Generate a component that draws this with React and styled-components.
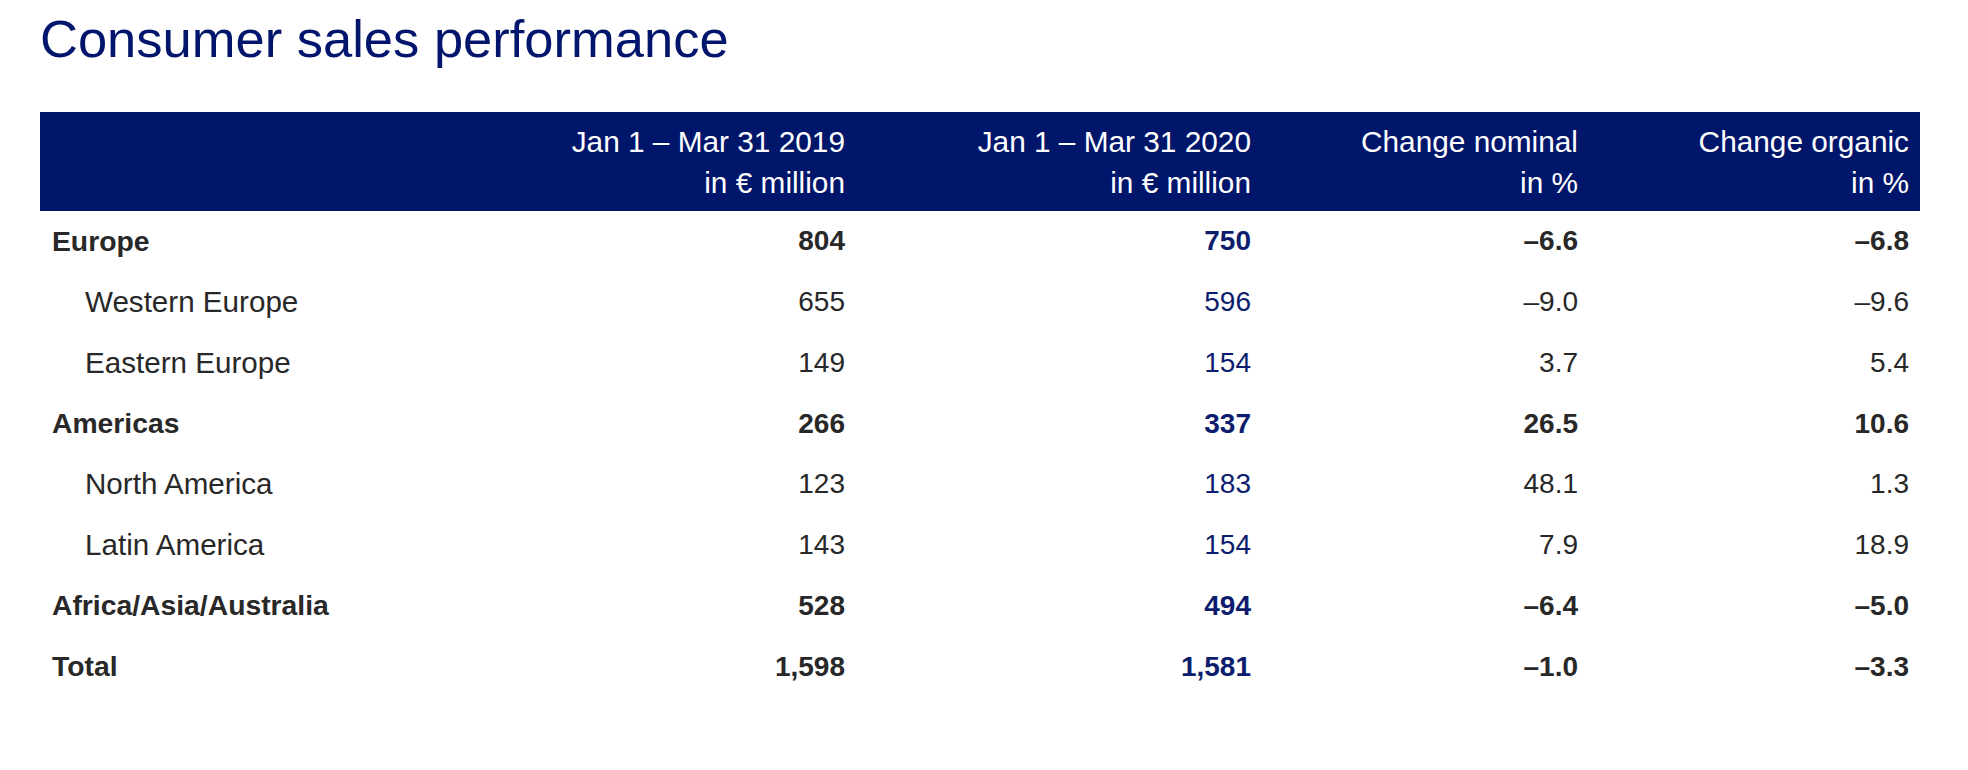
import React from "react";
import styled, { createGlobalStyle } from "styled-components";

const GlobalStyle = createGlobalStyle`
  html, body {
    margin: 0;
    padding: 0;
    background: #ffffff;
  }
  body {
    font-family: "Liberation Sans", Arial, "Helvetica Neue", sans-serif;
    -webkit-font-smoothing: antialiased;
  }
`;

const NAVY = "#00156b";
const TEXT = "#282828";
const COLS = "490px 326px 406px 327px 331px";

const Page = styled.div`
  width: 1968px;
  height: 770px;
  box-sizing: border-box;
  padding: 9px 48px 0 40px;
  display: flex;
  flex-direction: column;
`;

const Title = styled.h1`
  margin: 0 0 43px 0;
  font-weight: 400;
  font-size: 52.5px;
  line-height: 60px;
  color: ${NAVY};
  letter-spacing: 0;
`;

const Table = styled.div`
  display: flex;
  flex-direction: column;
  width: 1880px;
`;

const HeaderRow = styled.div`
  display: grid;
  grid-template-columns: ${COLS};
  background: #00166b;
  padding: 9px 0 8px 0;
`;

const HeadCell = styled.div`
  color: #ffffff;
  font-size: 29.8px;
  line-height: 41px;
  text-align: right;
  padding-right: 11px;
  white-space: nowrap;
`;

const Row = styled.div`
  display: grid;
  grid-template-columns: ${COLS};
  height: 60.75px;
  align-items: center;
`;

const LabelCell = styled.div`
  font-size: ${(p) => (p.$bold ? "28.3px" : "29.6px")};
  font-weight: ${(p) => (p.$bold ? 700 : 400)};
  color: ${TEXT};
  padding-left: ${(p) => (p.$indent ? "45px" : "12px")};
  white-space: nowrap;
`;

const NumCell = styled.div`
  font-size: 28px;
  font-weight: ${(p) => (p.$bold ? 700 : 400)};
  color: ${(p) => (p.$accent ? "#0d1d6e" : TEXT)};
  text-align: right;
  padding-right: 11px;
  white-space: nowrap;
`;

const headers = [
  ["Jan 1 – Mar 31 2019", "in € million"],
  ["Jan 1 – Mar 31 2020", "in € million"],
  ["Change nominal", "in %"],
  ["Change organic", "in %"],
];

const rows = [
  { label: "Europe", bold: true, v: ["804", "750", "–6.6", "–6.8"] },
  { label: "Western Europe", indent: true, v: ["655", "596", "–9.0", "–9.6"] },
  { label: "Eastern Europe", indent: true, v: ["149", "154", "3.7", "5.4"] },
  { label: "Americas", bold: true, v: ["266", "337", "26.5", "10.6"] },
  { label: "North America", indent: true, v: ["123", "183", "48.1", "1.3"] },
  { label: "Latin America", indent: true, v: ["143", "154", "7.9", "18.9"] },
  { label: "Africa/Asia/Australia", bold: true, v: ["528", "494", "–6.4", "–5.0"] },
  { label: "Total", bold: true, v: ["1,598", "1,581", "–1.0", "–3.3"] },
];

export default function App() {
  return (
    <>
      <GlobalStyle />
      <Page>
        <Title>Consumer sales performance</Title>
        <Table>
          <HeaderRow>
            <HeadCell />
            {headers.map((h, i) => (
              <HeadCell key={i}>
                {h[0]}
                <br />
                {h[1]}
              </HeadCell>
            ))}
          </HeaderRow>
          {rows.map((r) => (
            <Row key={r.label}>
              <LabelCell $bold={r.bold} $indent={r.indent}>
                {r.label}
              </LabelCell>
              {r.v.map((val, i) => (
                <NumCell key={i} $bold={r.bold} $accent={i === 1}>
                  {val}
                </NumCell>
              ))}
            </Row>
          ))}
        </Table>
      </Page>
    </>
  );
}
